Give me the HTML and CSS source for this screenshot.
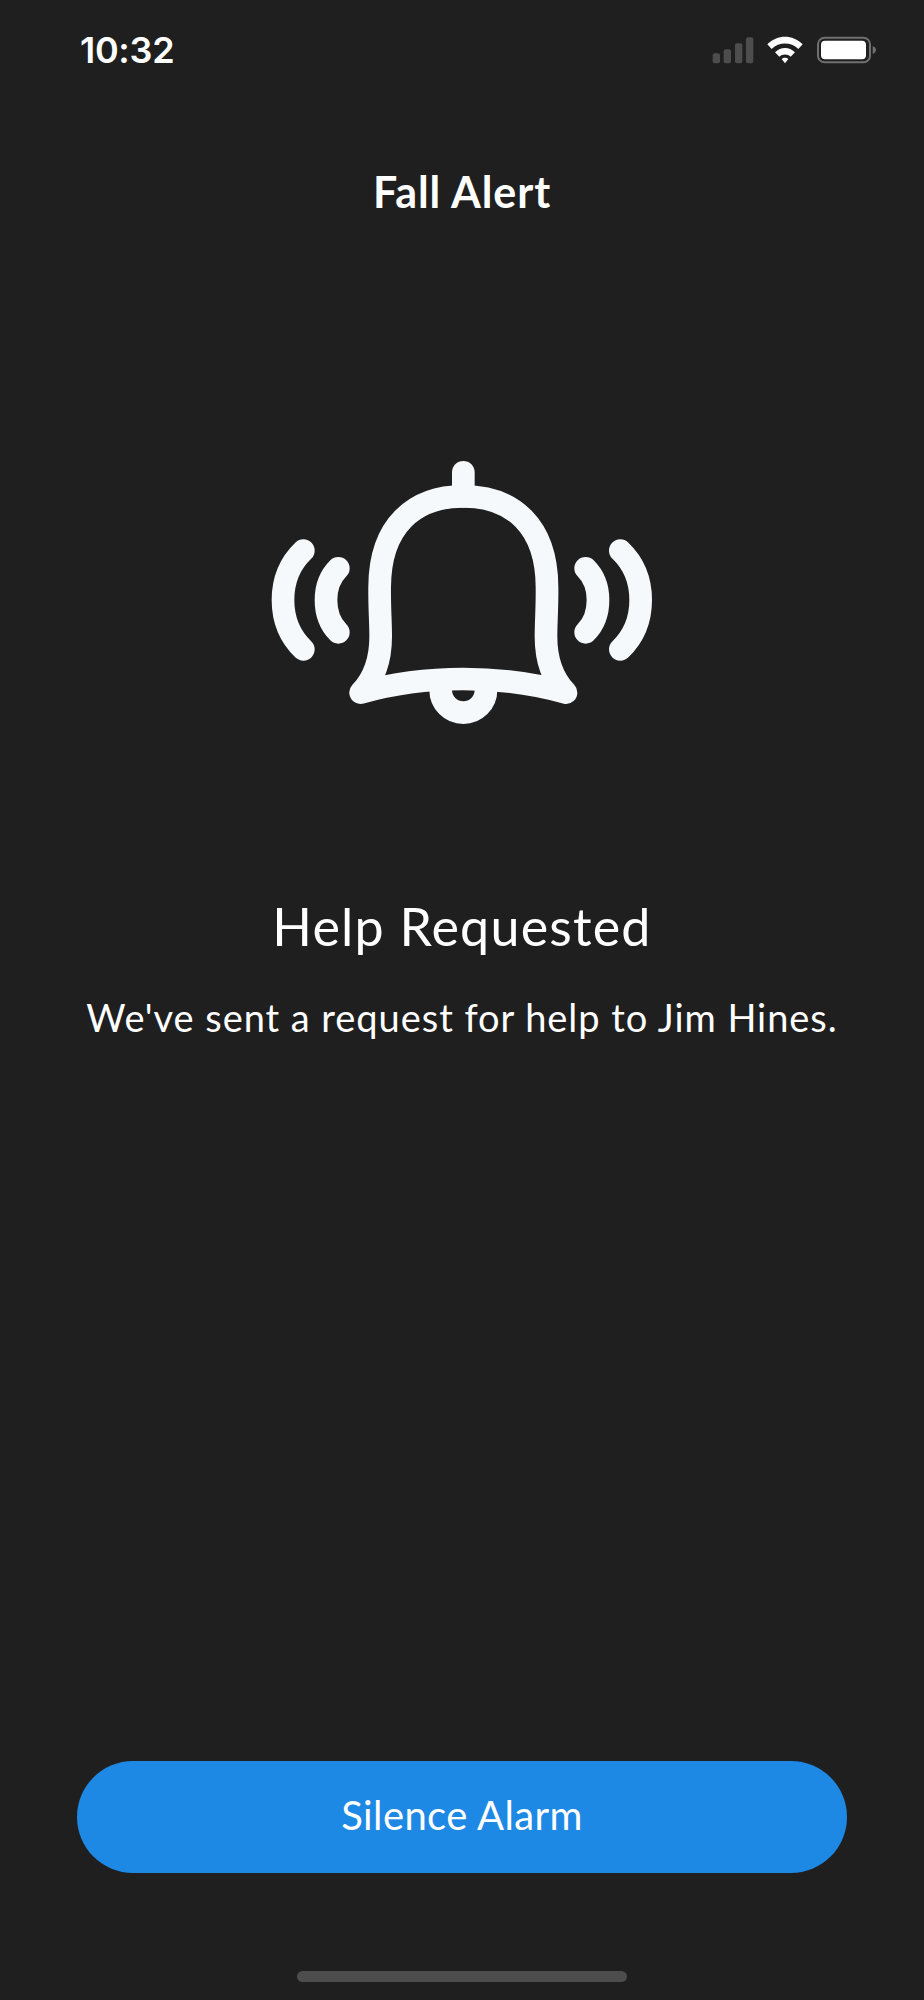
FILE: index.html
```html
<!DOCTYPE html>
<html lang="en">
<head>
  <meta charset="UTF-8">
  <title>Fall Alert</title>
  <link rel="stylesheet" href="styles.css">
</head>
<body>
  <div class="screen">
    <div class="status-bar">
      <span class="time">10:32</span>
      <svg class="status-icons" viewBox="0 0 570 180" width="190" height="60">
        <rect x="68" y="100" width="22" height="30" rx="6" fill="#4d4d4d"/>
        <rect x="101" y="88" width="22" height="42" rx="6" fill="#4d4d4d"/>
        <rect x="135" y="70" width="22" height="60" rx="6" fill="#4d4d4d"/>
        <rect x="168" y="52" width="22" height="78" rx="6" fill="#4d4d4d"/>
        <path fill="#fff" d="M232 73C262 43 308 43 338 73L325 87C303 65 267 65 245 87Z"/>
        <path fill="#fff" d="M255 97C272 80 298 80 315 97L302 110C293 101 277 101 268 110Z"/>
        <path fill="#fff" d="M275 117C280 112 290 112 295 117L285 130Z"/>
        <rect x="384" y="53" width="156" height="74" rx="20" fill="none" stroke="#707070" stroke-width="6"/>
        <rect x="393" y="62" width="135" height="56" rx="12" fill="#fff"/>
        <path fill="#707070" d="M548 78C554 80 558 85 558 90C558 95 554 100 548 102Z"/>
      </svg>
    </div>

    <h1 class="title">Fall Alert</h1>

    <svg class="bell" viewBox="0 0 1272 900" width="424" height="300">
      <g fill="none" stroke="#f5f9fb" stroke-width="68" stroke-linecap="round" stroke-linejoin="round">
        <path d="M640 97V169"/>
        <path d="M332 758C372 716 392 660 392 590C392 540 388 500 389 440C390 258 492 169 640 169C788 169 890 258 891 440C892 500 888 540 888 590C888 660 908 716 948 758C850 730 740 717 640 717C540 717 430 730 332 758Z"/>
        <path stroke-linecap="butt" d="M572 750A68 68 0 0 0 708 750"/>
        <path d="M160 332C115 375 99 425 99 480C99 535 115 585 160 628"/>
        <path d="M265 385C240 410 228 445 228 480C228 515 240 552 265 577"/>
        <path d="M1007 385C1032 410 1044 445 1044 480C1044 515 1032 552 1007 577"/>
        <path d="M1111 332C1156 375 1172 425 1172 480C1172 535 1156 585 1111 628"/>
      </g>
    </svg>

    <h2 class="heading">Help Requested</h2>
    <p class="message">We've sent a request for help to Jim Hines.</p>

    <button class="silence-btn">Silence Alarm</button>
    <div class="home-bar"></div>
  </div>
</body>
</html>
```

FILE: styles.css
```css
body {
  margin: 0;
  background-color: #1f1f1f;
  color: #fff;
  font-family: Lato, "Open Sans", sans-serif;
}
.screen {
  display: flex;
  flex-direction: column;
  align-items: center;
  width: 924px;
  height: 2000px;
  box-sizing: border-box;
  padding-bottom: 18px;
}
.status-bar {
  display: flex;
  justify-content: space-between;
  align-self: stretch;
  height: 80px;
  padding: 20px 44px 0 80px;
}
.time {
  font-family: Inter, sans-serif;
  font-size: 36px;
  font-weight: 600;
  line-height: 60px;
  letter-spacing: -0.3px;
}
.title {
  margin: 68px 0 0;
  font-size: 43px;
  font-weight: 700;
  line-height: 48px;
  letter-spacing: 0.9px;
}
.bell {
  margin-top: 224px;
}
.heading {
  margin: 156px 0 0;
  font-size: 52px;
  font-weight: 400;
  line-height: 60px;
  letter-spacing: 1.2px;
}
.message {
  margin: 38px 0 0;
  font-size: 38px;
  font-weight: 400;
  line-height: 46px;
  letter-spacing: 0.95px;
}
.silence-btn {
  margin-top: auto;
  width: 770px;
  height: 112px;
  padding-bottom: 6px;
  border: none;
  border-radius: 56px;
  background-color: #1e88e5;
  color: #fff;
  font-family: inherit;
  font-size: 40px;
  font-weight: 400;
  letter-spacing: 0.4px;
}
.home-bar {
  margin-top: 98px;
  width: 330px;
  height: 11px;
  border-radius: 6px;
  background-color: #4d4d4d;
}
```
